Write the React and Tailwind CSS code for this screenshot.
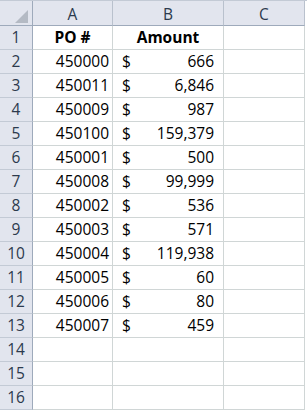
import React from "react";

const rows = [
  ["450000", "666"],
  ["450011", "6,846"],
  ["450009", "987"],
  ["450100", "159,379"],
  ["450001", "500"],
  ["450008", "99,999"],
  ["450002", "536"],
  ["450003", "571"],
  ["450004", "119,938"],
  ["450005", "60"],
  ["450006", "80"],
  ["450007", "459"],
];

const font = { fontFamily: '"Open Sans", "Noto Sans", sans-serif' };

function RowHead({ n }) {
  return (
    <div className="w-[33px] h-[24px] shrink-0 border-r border-b border-r-[#9eaabb] border-b-[#c3cad5] bg-[#e2e5ee] text-[#2c3a4d] flex items-end justify-center pb-[3px] leading-[18px]">
      {n}
    </div>
  );
}

export default function App() {
  return (
    <div className="w-[307px] h-[412px] bg-white text-[15.5px] text-black" style={font}>
      {/* header */}
      <div className="flex h-[26px] border-t border-[#c3cad5]">
        <div className="w-[33px] h-[25px] shrink-0 border-r border-b border-[#9eaabb] bg-[#e2e5ee] relative">
          <svg className="absolute left-0 top-0" width="32" height="24" viewBox="0 0 32 24">
            <polygon points="28,9 28,22 15,22" fill="#b4bac4" />
          </svg>
        </div>
        <div className="w-[80px] h-[25px] shrink-0 border-r border-b border-r-[#b9c1cd] border-b-[#9eaabb] bg-[#e2e5ee] text-[#2c3a4d] flex items-end justify-center pb-[2px] leading-[18px]">A</div>
        <div className="w-[111px] h-[25px] shrink-0 border-r border-b border-r-[#b9c1cd] border-b-[#9eaabb] bg-[#e2e5ee] text-[#2c3a4d] flex items-end justify-center pb-[2px] leading-[18px]">B</div>
        <div className="w-[81px] h-[25px] shrink-0 border-r border-b border-r-[#b9c1cd] border-b-[#9eaabb] bg-[#e2e5ee] text-[#2c3a4d] flex items-end justify-center pb-[2px] leading-[18px]">C</div>
      </div>
      {/* row 1 */}
      <div className="flex">
        <RowHead n={1} />
        <div className="w-[80px] h-[24px] shrink-0 border-r border-b border-[#d0d6d6] flex items-end justify-center pb-[3px] leading-[18px] font-bold">PO #</div>
        <div className="w-[111px] h-[24px] shrink-0 border-r border-b border-[#d0d6d6] flex items-end justify-center pb-[3px] leading-[18px] font-bold">Amount</div>
        <div className="w-[81px] h-[24px] shrink-0 border-r border-b border-[#d0d6d6]"></div>
      </div>
      {rows.map((r, i) => (
        <div className="flex" key={i}>
          <RowHead n={i + 2} />
          <div className="w-[80px] h-[24px] shrink-0 border-r border-b border-[#d0d6d6] flex items-end justify-end pr-[3px] pb-[3px] leading-[18px]">{r[0]}</div>
          <div className="w-[111px] h-[24px] shrink-0 border-r border-b border-[#d0d6d6] flex items-end justify-between pl-[9px] pr-[9px] pb-[3px] leading-[18px]">
            <span>$</span>
            <span>{r[1]}</span>
          </div>
          <div className="w-[81px] h-[24px] shrink-0 border-r border-b border-[#d0d6d6]"></div>
        </div>
      ))}
      {[14, 15, 16].map((n) => (
        <div className="flex" key={n}>
          <RowHead n={n} />
          <div className="w-[80px] h-[24px] shrink-0 border-r border-b border-[#d0d6d6]"></div>
          <div className="w-[111px] h-[24px] shrink-0 border-r border-b border-[#d0d6d6]"></div>
          <div className="w-[81px] h-[24px] shrink-0 border-r border-b border-[#d0d6d6]"></div>
        </div>
      ))}
    </div>
  );
}
